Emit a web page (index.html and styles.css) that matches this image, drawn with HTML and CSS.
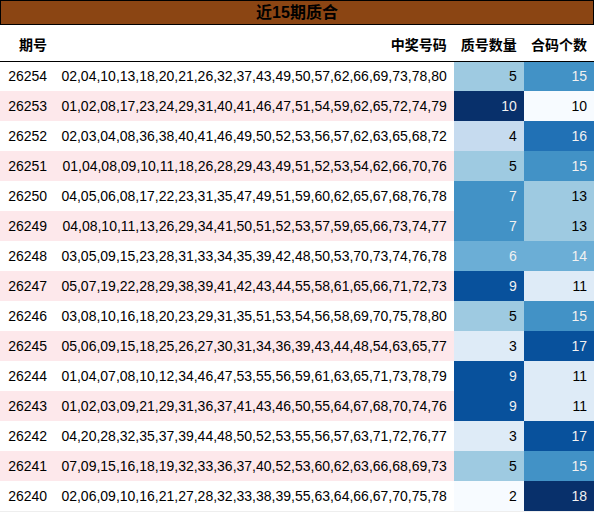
FILE: index.html
```html
<html>
    <head>
        <link rel="stylesheet" href="styles.css">
    </head>
    <body>
        <div class="title">近15期质合</div>
        <table class="draws">
            <colgroup>
                <col class="col-issue">
                <col class="col-numbers">
                <col class="col-count">
                <col class="col-count">
            </colgroup>
            <thead>
                <tr>
                    <th>期号</th>
                    <th>中奖号码</th>
                    <th>质号数量</th>
                    <th>合码个数</th>
                </tr>
            </thead>
            <tbody id="rows"></tbody>
        </table>

        <script>
            /* issue | numbers | primes | composites */
            var draws = [
                ["26254", "02,04,10,13,18,20,21,26,32,37,43,49,50,57,62,66,69,73,78,80", 5, 15],
                ["26253", "01,02,08,17,23,24,29,31,40,41,46,47,51,54,59,62,65,72,74,79", 10, 10],
                ["26252", "02,03,04,08,36,38,40,41,46,49,50,52,53,56,57,62,63,65,68,72", 4, 16],
                ["26251", "01,04,08,09,10,11,18,26,28,29,43,49,51,52,53,54,62,66,70,76", 5, 15],
                ["26250", "04,05,06,08,17,22,23,31,35,47,49,51,59,60,62,65,67,68,76,78", 7, 13],
                ["26249", "04,08,10,11,13,26,29,34,41,50,51,52,53,57,59,65,66,73,74,77", 7, 13],
                ["26248", "03,05,09,15,23,28,31,33,34,35,39,42,48,50,53,70,73,74,76,78", 6, 14],
                ["26247", "05,07,19,22,28,29,38,39,41,42,43,44,55,58,61,65,66,71,72,73", 9, 11],
                ["26246", "03,08,10,16,18,20,23,29,31,35,51,53,54,56,58,69,70,75,78,80", 5, 15],
                ["26245", "05,06,09,15,18,25,26,27,30,31,34,36,39,43,44,48,54,63,65,77", 3, 17],
                ["26244", "01,04,07,08,10,12,34,46,47,53,55,56,59,61,63,65,71,73,78,79", 9, 11],
                ["26243", "01,02,03,09,21,29,31,36,37,41,43,46,50,55,64,67,68,70,74,76", 9, 11],
                ["26242", "04,20,28,32,35,37,39,44,48,50,52,53,55,56,57,63,71,72,76,77", 3, 17],
                ["26241", "07,09,15,16,18,19,32,33,36,37,40,52,53,60,62,63,66,68,69,73", 5, 15],
                ["26240", "02,06,09,10,16,21,27,28,32,33,38,39,55,63,64,66,67,70,75,78", 2, 18]
            ];

            /* Blues colormap, 9 steps */
            var blues = ["#f7fbff", "#deebf7", "#c6dbef", "#9ecae1", "#6baed6",
                         "#4292c6", "#2171b5", "#08519c", "#08306b"];

            function shade(cell, value, min, max) {
                var step = Math.round((value - min) / (max - min) * 8);
                cell.style.background = blues[step];
                if (step >= 4) {
                    cell.className += " light";
                }
            }

            var body = document.getElementById("rows");
            for (var i = 0; i < draws.length; i++) {
                var row = document.createElement("tr");
                if (i % 2 == 1) {
                    row.className = "striped";
                }
                for (var j = 0; j < 4; j++) {
                    var cell = document.createElement("td");
                    cell.textContent = draws[i][j];
                    if (j == 2) {
                        cell.className = "num";
                        shade(cell, draws[i][j], 2, 10);
                    } else if (j == 3) {
                        cell.className = "num";
                        shade(cell, draws[i][j], 10, 18);
                    }
                    row.appendChild(cell);
                }
                body.appendChild(row);
            }
        </script>
    </body>
</html>
```

FILE: styles.css
```css
body {
  margin: 0;
  background: #fff;
  font-family: "Liberation Sans", "Noto Sans CJK SC", sans-serif;
  color: #000;
}

.title {
  box-sizing: border-box;
  width: 100%;
  height: 25px;
  border: 1px solid #000;
  background: #8b4513;
  font-size: 16px;
  font-weight: bold;
  line-height: 23px;
  text-align: center;
}

.draws {
  width: 594px;
  border-collapse: collapse;
  table-layout: fixed;
  font-size: 14px;
}

.col-issue {
  width: 54px;
}

.col-numbers {
  width: 399px;
}

.col-count {
  width: 70px;
}

.draws th {
  height: 36px;
  padding: 0 7px;
  border-bottom: 1px solid #000;
  font-weight: bold;
  text-align: right;
  vertical-align: middle;
  padding-top: 3px;
  box-sizing: border-box;
}

.draws td {
  height: 30px;
  padding: 0 7px;
  text-align: right;
  vertical-align: middle;
  white-space: nowrap;
}

.draws tbody tr:last-child td {
  border-bottom: 1px solid #eee;
}

.striped td {
  background: #fde8eb;
}

.draws td.light {
  color: #f1f1f1;
}
```
